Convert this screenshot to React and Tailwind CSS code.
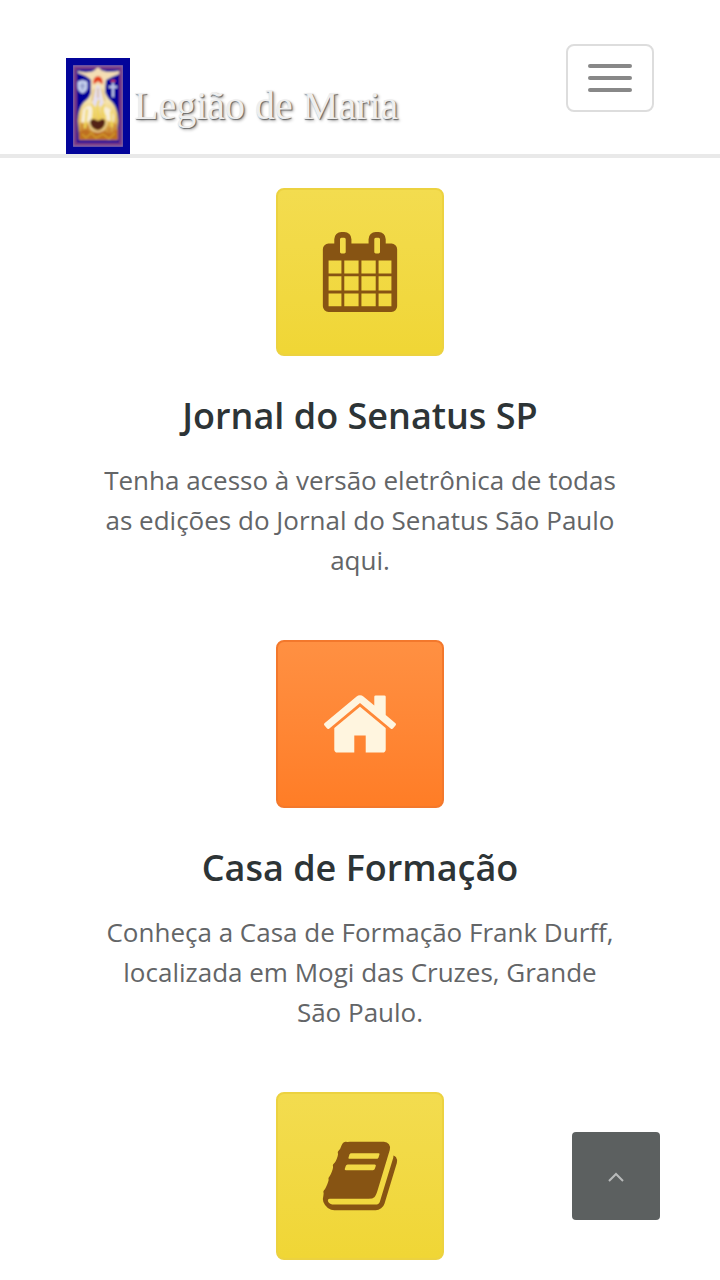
import React from "react";

const CALENDAR =
  "M192 1664h288v-288h-288v288zm352 0h320v-288h-320v288zm-352-352h288v-320h-288v320zm352 0h320v-320h-320v320zm-352-384h288v-288h-288v288zm736 736h320v-288h-320v288zm-384-736h320v-288h-320v288zm768 736h288v-288h-288v288zm-384-352h320v-320h-320v320zm-352-864v-288q0-13-9.5-22.5t-22.5-9.5h-64q-13 0-22.5 9.5t-9.5 22.5v288q0 13 9.5 22.5t22.5 9.5h64q13 0 22.5-9.5t9.5-22.5zm736 864h288v-320h-288v320zm-384-384h320v-288h-320v288zm384 0h288v-288h-288v288zm32-480v-288q0-13-9.5-22.5t-22.5-9.5h-64q-13 0-22.5 9.5t-9.5 22.5v288q0 13 9.5 22.5t22.5 9.5h64q13 0 22.5-9.5t9.5-22.5zm384-64v1280q0 52-38 90t-90 38h-1408q-52 0-90-38t-38-90v-1280q0-52 38-90t90-38h128v-96q0-66 47-113t113-47h64q66 0 113 47t47 113v96h384v-96q0-66 47-113t113-47h64q66 0 113 47t47 113v96h128q52 0 90 38t38 90z";

const HOUSE =
  "M1472 992v480q0 26-19 45t-45 19h-384v-384h-256v384h-384q-26 0-45-19t-19-45v-480q0-1 .5-3t.5-3l575-474 575 474q1 2 1 6zm223-69l-62 74q-8 9-21 11h-3q-13 0-21-7l-692-577-692 577q-12 8-24 7-13-2-21-11l-62-74q-8-10-7-23.5t11-21.5l719-599q32-26 76-26t76 26l244 204v-195q0-14 9-23t23-9h192q14 0 23 9t9 23v408l219 182q10 8 11 21.5t-7 23.5z";

const BOOK =
  "M1703 478q40 57 18 129l-275 906q-19 64-76.5 107.5t-122.5 43.5h-923q-77 0-148.5-53.5t-99.5-131.5q-24-67-2-127 0-4 3-27t4-37q1-8-3-21.5t-3-19.5q2-11 8-21t16.5-23.5 16.5-23.5q23-38 45-91.5t30-91.5q3-10 .5-30t-.5-28q3-11 17-28t17-23q21-36 42-92t25-90q1-9-2.5-32t.5-28q4-13 22-30.5t22-22.5q19-26 42.5-84.5t27.5-96.5q1-8-3-25.5t-2-26.5q2-8 9-18t18-23 17-21q8-12 16.5-30.5t15-35 16-36 19.5-32 26.5-23.5 36-11.5 47.5 5.5l-1 3q38-9 51-9h761q74 0 114 56t18 130l-274 906q-36 119-71.5 153.5t-128.5 34.5h-869q-27 0-38 15-11 16-1 43 24 70 144 70h923q29 0 56-15.5t35-41.5l300-987q7-22 5-57 38 15 59 43zm-1064 2q-4 13 2 22.5t20 9.5h608q13 0 25.5-9.5t16.5-22.5l21-64q4-13-2-22.5t-20-9.5h-608q-13 0-25.5 9.5t-16.5 22.5zm-83 256q-4 13 2 22.5t20 9.5h608q13 0 25.5-9.5t16.5-22.5l21-64q4-13-2-22.5t-20-9.5h-608q-13 0-25.5 9.5t-16.5 22.5z";

const YELLOW =
  "border-[#ecd240] bg-linear-to-b from-[#f3dc4f] to-[#f0d635] text-[#875413]";
const ORANGE =
  "border-[#f3782c] bg-linear-to-b from-[#ff9042] to-[#ff7d26] text-[#fff5df]";

const features = [
  {
    icon: CALENDAR,
    tone: YELLOW,
    title: "Jornal do Senatus SP",
    text: "Tenha acesso à versão eletrônica de todas as edições do Jornal do Senatus São Paulo aqui.",
  },
  {
    icon: HOUSE,
    tone: ORANGE,
    title: "Casa de Formação",
    text: "Conheça a Casa de Formação Frank Durff, localizada em Mogi das Cruzes, Grande São Paulo.",
  },
  { icon: BOOK, tone: YELLOW },
];

function Emblem() {
  return (
    <svg viewBox="0 0 64 96" className="h-24 w-16 shrink-0" aria-hidden="true">
      <defs>
        <filter id="soft" x="0" y="0" width="1" height="1">
          <feGaussianBlur stdDeviation="0.8" />
        </filter>
        <linearGradient id="robe" x1="0" y1="0" x2="0" y2="1">
          <stop offset="0" stopColor="#f3dcb4" />
          <stop offset="0.45" stopColor="#f6e6b4" />
          <stop offset="0.7" stopColor="#ecca62" />
          <stop offset="1" stopColor="#b8701f" />
        </linearGradient>
      </defs>
      <rect width="64" height="96" fill="#03049a" />
      <g filter="url(#soft)">
        <rect x="7" y="7.500" width="50" height="81" fill="#03049a" stroke="#a79ac8" strokeWidth="1.500" />
        <rect x="9" y="9.500" width="46" height="77" fill="none" stroke="#7d3a85" strokeWidth="3.500" />
        <path d="M12 13 L17 14 Q25 15 29 12 Q32 7 35 12 Q40 15 53 13 L53 16 Q45 19 40 22 L39 34 Q41 40 46 44 Q52 51 52 63 L51 82 L13 82 L12 63 Q12 51 18 44 Q24 40 25 34 L25 22 Q20 17 12 15Z" fill="url(#robe)" />
        <path d="M28 25 Q28 19 32 19 Q36 19 36 25 L34 24 Q32 21 30 24Z" fill="#e33c17" stroke="#e33c17" strokeWidth="1.500" />
        <path d="M30 29 Q32 25 34 29 L36 39 L38 48 L26 48 L28 39Z" fill="#e5dff3" />
        <path d="M28 31 L26 43 M36 31 L39 43 M32 30 L32 40" stroke="#d2a55f" strokeWidth="1" />
        <path d="M17 52 Q22 46 27 49 L26 62 Q20 66 15 64Z M38 49 Q45 49 48 58 L48 64 Q42 64 38 59Z" fill="#f8efdc" />
        <path d="M26 46 Q30 55 25 64 M33 42 Q29 51 34 61 M38 46 Q35 52 40 60 M21 51 L19 70 M45 53 L46 69" fill="none" stroke="#efd552" strokeWidth="2" />
        <path d="M16 65 L16 81 M22 67 L21 82 M43 69 L44 82 M49 66 L48 82" stroke="#c8782a" strokeWidth="1.500" />
        <path d="M13 74 L20 71 L27 75 L38 73 L44 76 L52 71 L52 82 L13 82Z" fill="#bd6e22" />
        <path d="M16 76 L20 80 L25 75 L30 80 L37 76 L43 81 L49 75" fill="none" stroke="#d6a52e" strokeWidth="1.200" />
        <path d="M24 65 Q24 61 28 61 L32 63 L36 61 Q40 61 39 66 Q37 71 32 72 Q26 71 24 65Z" fill="#532317" />
        <path d="M23 62 Q23 73 32 74 Q40 73 41 62" fill="none" stroke="#f4e4ac" strokeWidth="1.200" />
        <path d="M12 24 Q16.500 21 21 24 L21 30 Q20 34 16.500 35 Q12 33 12 29Z" fill="#bfcbea" stroke="#eaf0fa" strokeWidth="0.800" />
        <path d="M16.500 25 L16.500 32 M14 28 L19 28" stroke="#7881b9" strokeWidth="1" />
        <path d="M47 25 L47 39 M43 29 L51 29" stroke="#c2c9ea" strokeWidth="2" />
        <path d="M45 23 L49 23" stroke="#ca3f45" strokeWidth="2" />
      </g>
    </svg>
  );
}

function Feature({ icon, tone, title, text }) {
  return (
    <section className="flex flex-col items-center text-center">
      <div className={`flex size-42 items-center justify-center rounded-lg border-2 ${tone}`}>
        <svg viewBox="0 0 1792 1792" className="size-20 fill-current" aria-hidden="true">
          <path d={icon} />
        </svg>
      </div>
      {title && (
        <h2 className="mt-9 text-4xl leading-12 font-semibold text-[#2d3436]">{title}</h2>
      )}
      {text && <p className="mt-5 text-[26px] leading-10 text-[#636567]">{text}</p>}
    </section>
  );
}

export default function App() {
  return (
    <div className="bg-white font-['Open_Sans',sans-serif]">
      <header className="flex items-start justify-between border-b-4 border-[#e9e9e9] px-[66px] pt-11">
        <a href="#inicio" className="mt-3.5 flex items-center gap-1">
          <Emblem />
          <span className="font-['Liberation_Serif',serif] text-[40px] leading-12 whitespace-nowrap text-[#eeeeee] [text-shadow:1px_1px_1px_#666,2px_2px_3px_#aaa]">
            Legião de Maria
          </span>
        </a>
        <button
          type="button"
          aria-label="Menu"
          className="flex h-17 w-22 flex-col items-center justify-center gap-2 rounded-lg border-2 border-[#dddddd] bg-white"
        >
          <span className="h-1 w-11 rounded-xs bg-[#888888]" />
          <span className="h-1 w-11 rounded-xs bg-[#888888]" />
          <span className="h-1 w-11 rounded-xs bg-[#888888]" />
        </button>
      </header>
      <main className="flex flex-col gap-15 px-25 pt-[30px] pb-5">
        {features.map((feature, i) => (
          <Feature key={i} {...feature} />
        ))}
      </main>
      <button
        type="button"
        aria-label="Voltar ao topo"
        className="fixed right-15 bottom-15 flex size-22 items-center justify-center rounded-sm bg-[#5c6060] text-[#b9bbbb]"
      >
        <svg viewBox="0 0 16 16" className="size-4" fill="none" stroke="currentColor" strokeWidth="2" aria-hidden="true">
          <path d="M1 13 L8 6 L15 13" />
        </svg>
      </button>
    </div>
  );
}
